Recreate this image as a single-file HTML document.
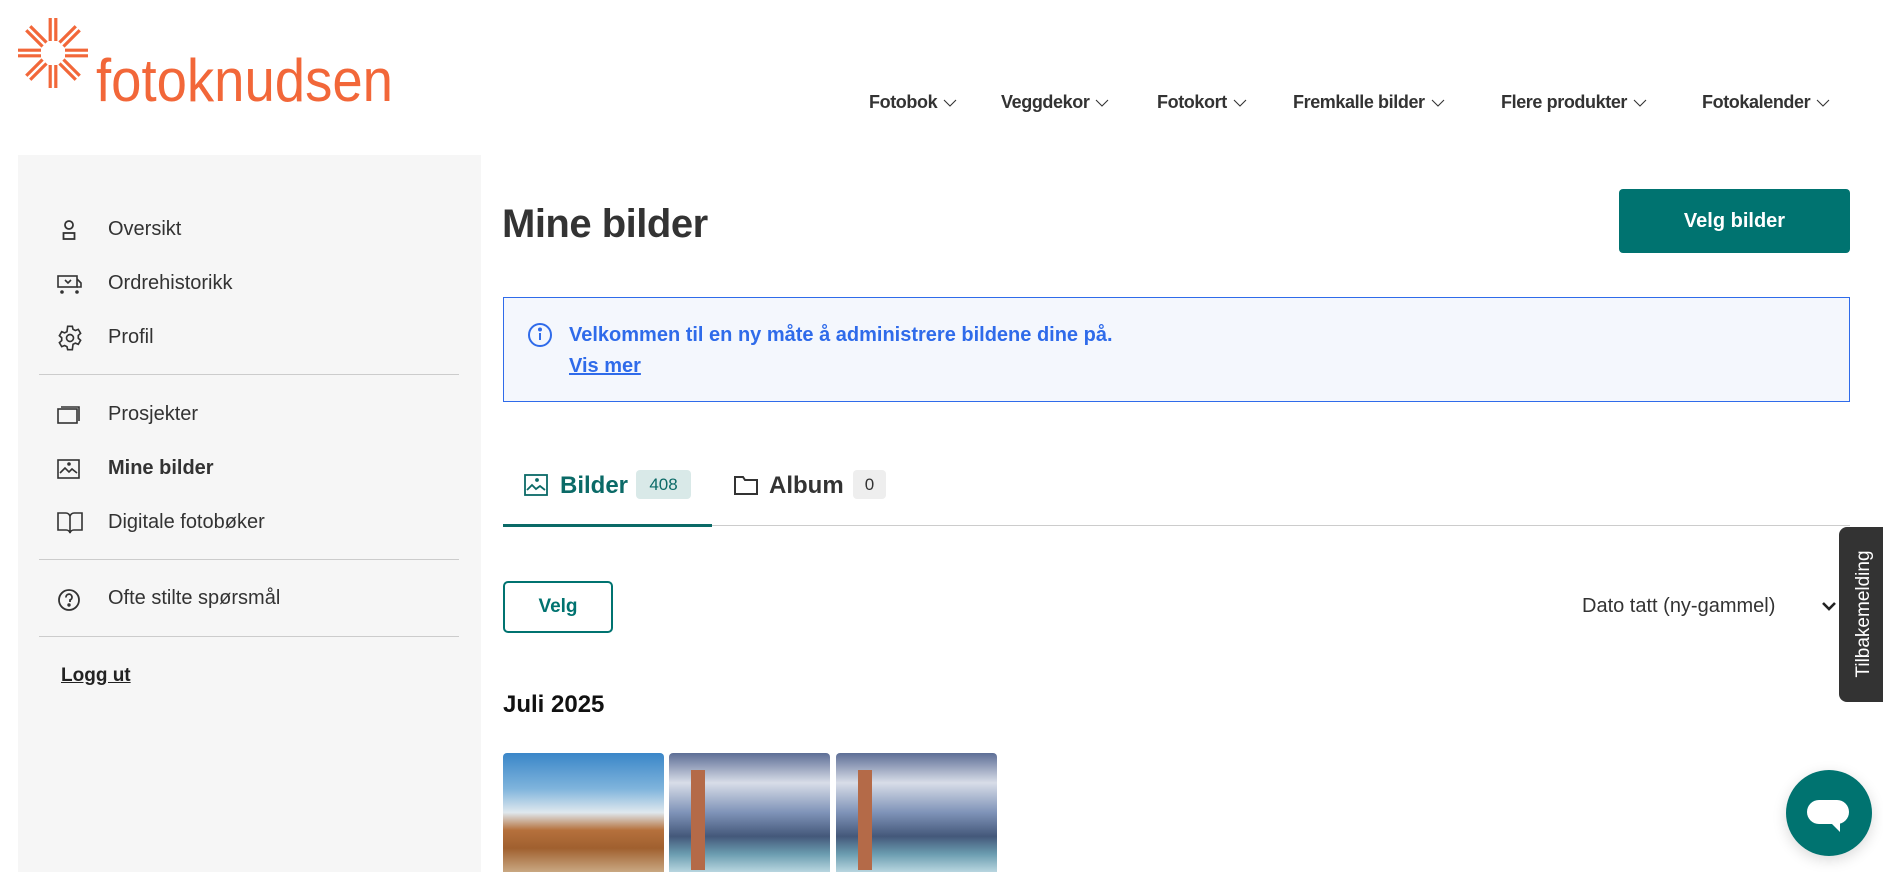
<!DOCTYPE html>
<html><head><meta charset="utf-8"><style>
*{margin:0;padding:0;box-sizing:border-box}
body{width:1883px;height:872px;overflow:hidden;background:#fff;font-family:"Liberation Sans",sans-serif;color:#333;position:relative}
.a{position:absolute;white-space:nowrap}
.nav{top:92px;font-size:18px;font-weight:bold;color:#333;letter-spacing:-0.4px}
.nav svg{margin-left:6px;vertical-align:middle}
.side{left:18px;top:155px;width:463px;height:717px;background:#f6f6f6}
.si{left:108px;font-size:20px;color:#333}
.ic{left:56px}
.hr{left:39px;width:420px;height:1px;background:#ccc}
</style></head><body>
<svg class="a" style="left:0;top:0" width="420" height="130">
<g stroke="#f26739" stroke-width="3.2" stroke-linecap="butt">
<g transform="translate(53,53)">
<g id="r"><line x1="-2.8" y1="-12" x2="-2.8" y2="-35"/><line x1="2.8" y1="-12" x2="2.8" y2="-35"/></g>
<use href="#r" transform="rotate(45)"/><use href="#r" transform="rotate(90)"/><use href="#r" transform="rotate(135)"/><use href="#r" transform="rotate(180)"/><use href="#r" transform="rotate(225)"/><use href="#r" transform="rotate(270)"/><use href="#r" transform="rotate(315)"/>
</g></g>
<text x="96" y="101" font-family="Liberation Sans, sans-serif" font-size="60" fill="#f26739" textLength="297" lengthAdjust="spacingAndGlyphs">fotoknudsen</text>
</svg>

<div class="a nav" style="left:869px">Fotobok<svg width="14" height="10"><path d="M1 2l6 6 6-6" fill="none" stroke="#333" stroke-width="1.1"/></svg></div>
<div class="a nav" style="left:1001px">Veggdekor<svg width="14" height="10"><path d="M1 2l6 6 6-6" fill="none" stroke="#333" stroke-width="1.1"/></svg></div>
<div class="a nav" style="left:1157px">Fotokort<svg width="14" height="10"><path d="M1 2l6 6 6-6" fill="none" stroke="#333" stroke-width="1.1"/></svg></div>
<div class="a nav" style="left:1293px">Fremkalle bilder<svg width="14" height="10"><path d="M1 2l6 6 6-6" fill="none" stroke="#333" stroke-width="1.1"/></svg></div>
<div class="a nav" style="left:1501px">Flere produkter<svg width="14" height="10"><path d="M1 2l6 6 6-6" fill="none" stroke="#333" stroke-width="1.1"/></svg></div>
<div class="a nav" style="left:1702px">Fotokalender<svg width="14" height="10"><path d="M1 2l6 6 6-6" fill="none" stroke="#333" stroke-width="1.1"/></svg></div>

<div class="a side"></div>
<svg class="a ic" style="top:219px" width="26" height="24" fill="none" stroke="#333" stroke-width="1.8"><circle cx="13" cy="6" r="4"/><rect x="7.5" y="14" width="11" height="6"/></svg>
<div class="a si" style="top:218px">Oversikt</div>
<svg class="a ic" style="top:273px" width="28" height="24" fill="none" stroke="#333" stroke-width="1.6"><rect x="2" y="3" width="19" height="11"/><path d="M21 6l4 4v4h-4"/><circle cx="6" cy="19" r="1" fill="#333"/><circle cx="21" cy="19" r="1" fill="#333"/><path d="M9 7l3 3 3-3" /></svg>
<div class="a si" style="top:272px">Ordrehistorikk</div>
<svg class="a ic" style="top:324px" width="28" height="28" viewBox="0 0 24 24" fill="none" stroke="#333" stroke-width="1.4"><circle cx="12" cy="12" r="3"/><path d="M10 2h4l.6 2.6 2 1 2.5-1 2 3.4-2 1.8v2.4l2 1.8-2 3.4-2.5-1-2 1L14 22h-4l-.6-2.6-2-1-2.5 1-2-3.4 2-1.8v-2.4l-2-1.8 2-3.4 2.5 1 2-1z"/></svg>
<div class="a si" style="top:326px">Profil</div>
<div class="a hr" style="top:374px"></div>
<svg class="a ic" style="top:404px" width="26" height="22" fill="none" stroke="#333" stroke-width="1.6"><rect x="2" y="5" width="19" height="14"/><path d="M5 3h18v14"/></svg>
<div class="a si" style="top:403px">Prosjekter</div>
<svg class="a ic" style="top:458px" width="26" height="22" fill="none" stroke="#333" stroke-width="1.6"><rect x="2" y="2" width="21" height="18"/><path d="M4 15l5-5 4 4 3-3 5 4"/><circle cx="13" cy="6" r="1" fill="#333"/></svg>
<div class="a si" style="top:457px;font-weight:bold">Mine bilder</div>
<svg class="a ic" style="top:510px" width="28" height="26" fill="none" stroke="#333" stroke-width="1.6"><path d="M2 3h8a4 4 0 0 1 4 4v16a4 4 0 0 0-4-3H2zM26 3h-8a4 4 0 0 0-4 4v16a4 4 0 0 1 4-3h8z"/></svg>
<div class="a si" style="top:511px">Digitale fotobøker</div>
<div class="a hr" style="top:559px"></div>
<svg class="a ic" style="top:588px" width="26" height="24" fill="none" stroke="#333" stroke-width="1.8"><circle cx="13" cy="12" r="10"/><path d="M10 9.5a3 3 0 1 1 4 2.5v2"/><circle cx="13" cy="17" r=".8" fill="#333"/></svg>
<div class="a si" style="top:587px">Ofte stilte spørsmål</div>
<div class="a hr" style="top:636px"></div>
<div class="a" style="left:61px;top:665px;font-size:19px;font-weight:bold;text-decoration:underline;color:#222">Logg ut</div>

<div class="a" style="left:502px;top:202px;font-size:40px;font-weight:bold;color:#333;letter-spacing:-0.5px">Mine bilder</div>
<div class="a" style="left:1619px;top:189px;width:231px;height:64px;background:#007370;border-radius:4px;color:#fff;font-size:20px;font-weight:bold;text-align:center;line-height:64px">Velg bilder</div>

<div class="a" style="left:503px;top:297px;width:1347px;height:105px;border:1.5px solid #2f6bea;background:#f4f7fd"></div>
<svg class="a" style="left:527px;top:322px" width="26" height="26" fill="none" stroke="#2f6bea" stroke-width="2"><circle cx="13" cy="13" r="11"/><path d="M13 11v7"/><circle cx="13" cy="7.5" r="1" fill="#2f6bea"/></svg>
<div class="a" style="left:569px;top:324px;font-size:20px;font-weight:bold;color:#2f6bea">Velkommen til en ny måte å administrere bildene dine på.</div>
<div class="a" style="left:569px;top:355px;font-size:20px;font-weight:bold;color:#2f6bea;text-decoration:underline">Vis mer</div>

<svg class="a" style="left:524px;top:474px" width="24" height="22" fill="none" stroke="#0b6a67" stroke-width="1.8"><rect x="1" y="1" width="22" height="20"/><path d="M3 16l5-5 4 4 4-3 5 4"/><circle cx="13" cy="6" r="1" fill="#0b6a67"/></svg>
<div class="a" style="left:560px;top:472px;font-size:24px;font-weight:bold;color:#0b6a67">Bilder</div>
<div class="a" style="left:636px;top:470px;width:55px;height:29px;background:#d9e9e8;border-radius:4px;font-size:17px;color:#0b6a67;text-align:center;line-height:29px">408</div>
<svg class="a" style="left:734px;top:474px" width="24" height="22" fill="none" stroke="#333" stroke-width="2"><path d="M1 3h8l2 3h12v14H1z"/></svg>
<div class="a" style="left:769px;top:472px;font-size:24px;font-weight:bold;color:#333">Album</div>
<div class="a" style="left:853px;top:470px;width:33px;height:29px;background:#eee;border-radius:4px;font-size:17px;color:#333;text-align:center;line-height:29px">0</div>
<div class="a" style="left:503px;top:525px;width:1347px;height:1px;background:#ccc"></div>
<div class="a" style="left:503px;top:524px;width:209px;height:3px;background:#0b6a67"></div>

<div class="a" style="left:503px;top:581px;width:110px;height:52px;border:2px solid #007370;border-radius:5px;color:#007370;font-size:19px;font-weight:bold;text-align:center;line-height:48px">Velg</div>
<div class="a" style="left:1582px;top:595px;font-size:20px;color:#333">Dato tatt (ny-gammel)</div>
<svg class="a" style="left:1821px;top:601px" width="16" height="12" fill="none" stroke="#222" stroke-width="2.6"><path d="M2 2l6 6 6-6"/></svg>

<div class="a" style="left:503px;top:691px;font-size:24px;font-weight:bold;color:#111">Juli 2025</div>

<div class="a" style="left:503px;top:753px;width:161px;height:119px;border-radius:4px 4px 0 0;background:linear-gradient(180deg,#3a86c8 0%,#7fb4dc 30%,#dfe8ee 50%,#b5703c 65%,#a0602f 80%,#c9a882 100%)"></div>
<div class="a" style="left:669px;top:753px;width:161px;height:119px;border-radius:4px 4px 0 0;background:linear-gradient(180deg,#5d6e96 0%,#d8dde8 25%,#7f93b8 50%,#44587a 70%,#6b9db0 85%,#b8d6e0 100%)"></div>
<div class="a" style="left:836px;top:753px;width:161px;height:119px;border-radius:4px 4px 0 0;background:linear-gradient(180deg,#5d6e96 0%,#d8dde8 25%,#7f93b8 50%,#44587a 70%,#6b9db0 85%,#b8d6e0 100%)"></div>
<div class="a" style="left:691px;top:770px;width:14px;height:100px;background:#b46a48"></div>
<div class="a" style="left:858px;top:770px;width:14px;height:100px;background:#b46a48"></div>

<div class="a" style="left:1839px;top:527px;width:50px;height:175px;background:#333;border-radius:8px 0 0 8px"></div>
<div class="a" style="left:1864px;top:614px;font-size:19px;color:#fff;transform:translate(-50%,-50%) rotate(-90deg)">Tilbakemelding</div>

<div class="a" style="left:1786px;top:770px;width:86px;height:86px;border-radius:50%;background:#007370;box-shadow:0 4px 14px rgba(0,0,0,.15)"></div>
<div class="a" style="left:1807px;top:800px;width:42px;height:24px;border-radius:12px;background:#fff"></div>
<svg class="a" style="left:1830px;top:822px" width="12" height="10"><path d="M0 0h10v10z" fill="#fff"/></svg>
</body></html>
